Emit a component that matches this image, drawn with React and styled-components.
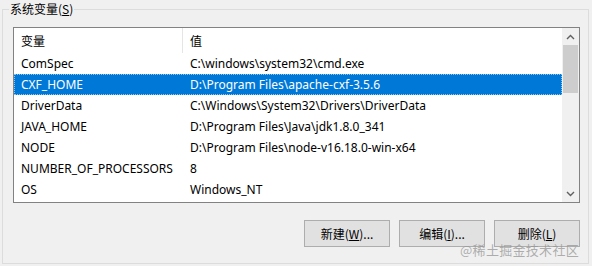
import React from 'react';
import styled, { createGlobalStyle } from 'styled-components';

const GlobalStyle = createGlobalStyle`
  html, body {
    margin: 0;
    padding: 0;
    background: #f0f0f0;
    font-family: "Noto Sans", "Noto Sans CJK SC", sans-serif;
    font-size: 12px;
    color: #000;
  }
`;

const Page = styled.div`
  width: 592px;
  height: 266px;
  padding: 9px 3px 0 2px;
  box-sizing: border-box;
  position: relative;
  overflow: hidden;
`;

const Group = styled.div`
  position: relative;
  height: 255px;
  border: 1px solid #dcdcdc;
  box-sizing: border-box;
  padding: 17px 8px 0 10px;
`;

const Legend = styled.span`
  position: absolute;
  top: -10px;
  left: 6px;
  padding: 0 1px;
  background: #f0f0f0;
  font-family: "Noto Sans CJK SC", sans-serif;
  font-size: 12px;
  line-height: 18px;
  & u { text-decoration: underline; }
`;

const ListBox = styled.div`
  height: 176px;
  border: 1px solid #828282;
  background: #fff;
  box-sizing: border-box;
  display: flex;
  overflow: hidden;
`;

const Table = styled.div`
  flex: 1;
  display: flex;
  flex-direction: column;
`;

const HeaderRow = styled.div`
  height: 25px;
  display: grid;
  grid-template-columns: 169px 1fr;
  flex-shrink: 0;
`;

const HeaderCell = styled.div`
  padding-left: 7px;
  display: flex;
  align-items: center;
  font-family: "Noto Sans CJK SC", sans-serif;
  border-right: ${p => (p.$divider ? '1px solid #e5e5e5' : 'none')};
`;

const Row = styled.div`
  height: 21px;
  flex-shrink: 0;
  display: grid;
  grid-template-columns: 169px 1fr;
  background: ${p => (p.$selected ? '#0078d7' : 'transparent')};
  color: ${p => (p.$selected ? '#fff' : '#000')};
  outline: ${p => (p.$selected ? '1px dotted #8fc4ee' : 'none')};
  outline-offset: -1px;
`;

const Cell = styled.div`
  padding-left: 7px;
  display: flex;
  align-items: center;
  white-space: nowrap;
  line-height: 21px;
`;

const ScrollBar = styled.div`
  width: 17px;
  background: #f0f0f0;
  display: flex;
  flex-direction: column;
  flex-shrink: 0;
`;

const Arrow = styled.div`
  height: 17px;
  display: flex;
  align-items: center;
  justify-content: center;
`;

const Thumb = styled.div`
  height: 48px;
  margin: 0 1px;
  background: #cdcdcd;
`;

const Track = styled.div`
  flex: 1;
`;

const ButtonRow = styled.div`
  display: flex;
  justify-content: flex-end;
  gap: 9px;
  margin-top: 17px;
  padding-right: 0;
`;

const Button = styled.div`
  width: 86px;
  height: 27px;
  box-sizing: border-box;
  background: #e1e1e1;
  border: 1px solid #adadad;
  display: flex;
  align-items: center;
  justify-content: center;
  font-family: "Noto Sans CJK SC", sans-serif;
  font-size: 12px;
  & u { text-decoration: underline; }
`;

const Watermark = styled.div`
  position: absolute;
  right: 13px;
  bottom: 7px;
  font-family: "Noto Sans CJK SC", sans-serif;
  font-size: 13px;
  color: rgba(150, 150, 150, 0.75);
  letter-spacing: 0.3px;
`;

const Chevron = ({ up }) => (
  <svg width="9" height="6" viewBox="0 0 9 6">
    <path
      d={up ? 'M1 5 L4.5 1.5 L8 5' : 'M1 1 L4.5 4.5 L8 1'}
      fill="none"
      stroke="#606060"
      strokeWidth="1.4"
    />
  </svg>
);

const vars = [
  ['ComSpec', 'C:\\windows\\system32\\cmd.exe'],
  ['CXF_HOME', 'D:\\Program Files\\apache-cxf-3.5.6'],
  ['DriverData', 'C:\\Windows\\System32\\Drivers\\DriverData'],
  ['JAVA_HOME', 'D:\\Program Files\\Java\\jdk1.8.0_341'],
  ['NODE', 'D:\\Program Files\\node-v16.18.0-win-x64'],
  ['NUMBER_OF_PROCESSORS', '8'],
  ['OS', 'Windows_NT'],
];

export default function App() {
  return (
    <Page>
      <GlobalStyle />
      <Group>
        <Legend>系统变量(<u>S</u>)</Legend>
        <ListBox>
          <Table>
            <HeaderRow>
              <HeaderCell $divider>变量</HeaderCell>
              <HeaderCell>值</HeaderCell>
            </HeaderRow>
            {vars.map(([name, value]) => (
              <Row key={name} $selected={name === 'CXF_HOME'}>
                <Cell>{name}</Cell>
                <Cell>{value}</Cell>
              </Row>
            ))}
          </Table>
          <ScrollBar>
            <Arrow><Chevron up /></Arrow>
            <Thumb />
            <Track />
            <Arrow><Chevron /></Arrow>
          </ScrollBar>
        </ListBox>
        <ButtonRow>
          <Button>新建(<u>W</u>)...</Button>
          <Button>编辑(<u>I</u>)...</Button>
          <Button>删除(<u>L</u>)</Button>
        </ButtonRow>
      </Group>
      <Watermark>@稀土掘金技术社区</Watermark>
    </Page>
  );
}
